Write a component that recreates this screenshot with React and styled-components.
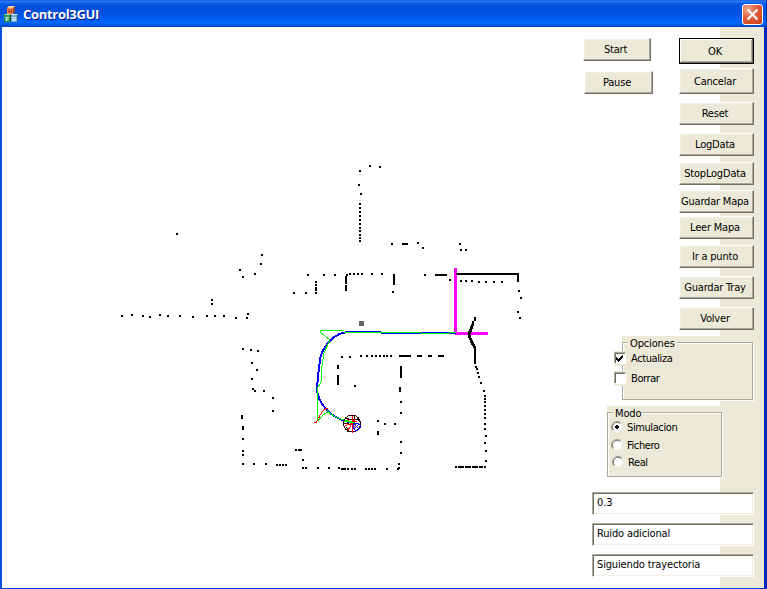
import React from 'react';
import styled, { createGlobalStyle } from 'styled-components';

const face = '#ece9d8';

const GlobalStyle = createGlobalStyle`
  * { box-sizing: border-box; }
  body { margin: 0; overflow: hidden; }
  button, input { font: inherit; color: inherit; letter-spacing: inherit; }
`;

const Window = styled.div`
  width: 767px;
  height: 589px;
  display: flex;
  flex-direction: column;
  color: #000;
  font-family: 'DejaVu Sans Condensed', 'DejaVu Sans', sans-serif;
  font-stretch: condensed;
  font-size: 11px;
  line-height: 13px;
  letter-spacing: -0.15px;
`;

const TitleBar = styled.header`
  height: 27px;
  flex: none;
  display: flex;
  align-items: center;
  padding: 1px 3px 0 4px;
  background: linear-gradient(to bottom, #0a4fd8 0, #2b7cf5 1px, #2272f0 2px, #0558e3 4px, #0150dc 8px, #0152e2 14px, #025ef5 19px, #0266ff 23px, #0157e0 25px, #003fc4 27px);
  border-right: 1px solid #0130a8;
`;

const Title = styled.h1`
  flex: 1;
  margin: 0 0 0 4px;
  color: #fff;
  font: bold 13px/18px 'Open Sans', 'Noto Sans', sans-serif;
  letter-spacing: -0.3px;
  text-shadow: 1px 1px 0 #0a1883;
`;

const CloseButton = styled.button`
  width: 21px;
  height: 21px;
  display: grid;
  place-items: center;
  padding: 0;
  border: 1px solid #fff;
  border-radius: 3px;
  background: radial-gradient(circle at 25% 20%, #f0a48c 0, #e2603c 45%, #cc3a12 100%);
`;

const Client = styled.main`
  flex: 1;
  min-height: 0;
  display: flex;
  border-left: 2px solid #0550e0;
  border-right: 3px solid #0128b8;
  border-bottom: 1px solid #0045dc;
  background: linear-gradient(to right, #fff 718px, ${face} 718px);
`;

const MapDrawing = styled.svg`
  width: 581px;
  height: 561px;
  flex: none;
  display: block;
`;

const Panel = styled.aside`
  width: 171px;
  flex: none;
  padding-top: 11px;
`;

const ButtonColumns = styled.div`
  display: flex;
  justify-content: space-between;
`;

const ButtonColumn = styled.div`
  display: flex;
  flex-direction: column;
`;

const PushButton = styled.button`
  width: ${(p) => p.$width || 75}px;
  height: ${(p) => p.$height || 23}px;
  margin: ${(p) => p.$gap || 0}px 0 0 ${(p) => p.$indent || 0}px;
  padding: 0 3px ${(p) => (p.$height ? 0 : 1)}px 0;
  border: 1px solid;
  border-color: ${(p) => (p.$default ? '#000' : '#fff #716f64 #716f64 #fff')};
  box-shadow: ${(p) => p.$default
    ? 'inset -1px -1px #716f64, inset 1px 1px #fff, inset -2px -2px #aca899'
    : 'inset -1px -1px #aca899, inset 1px 1px #f1efe2'};
  background: ${face};
  letter-spacing: -0.2px;
  white-space: nowrap;
`;

const GroupBox = styled.section`
  width: ${(p) => p.$width}px;
  height: ${(p) => p.$height}px;
  margin: ${(p) => p.$gap}px 0 0 ${(p) => p.$indent}px;
  padding-top: 6px;
  background: ${face};
`;

const GroupFrame = styled.div`
  height: 100%;
  border: 1px solid #aca899;
  box-shadow: 1px 1px #fff, inset 1px 1px #fff;
`;

const GroupLegend = styled.h2`
  width: max-content;
  margin: -6px 0 0 5px;
  padding: 0 2px;
  font: inherit;
  background: ${face};
`;

const Option = styled.label`
  width: max-content;
  display: flex;
  align-items: center;
  height: ${(p) => p.$height}px;
  margin: ${(p) => p.$gap || 0}px 0 0 ${(p) => p.$indent || 0}px;
  gap: ${(p) => p.$space || 4}px;
  letter-spacing: -0.4px;
`;

const CheckMark = styled.span`
  width: 13px;
  height: 15px;
  display: flex;
  align-items: flex-start;
  padding-top: 1px;
  background: ${face};
`;

const CheckFace = styled.span`
  width: 12px;
  height: 12px;
  display: grid;
  place-items: center;
  border: 1px solid;
  border-color: #aca899 #fff #fff #aca899;
  box-shadow: inset 1px 1px #716f64, inset -1px -1px #fff;
  background: #fff;
`;

const RadioIcon = styled.svg`
  width: 12px;
  height: 12px;
  display: block;
  margin-top: -1px;
`;

const Fields = styled.div`
  display: flex;
  flex-direction: column;
  gap: 8px;
  margin: 15px 0 0 9px;
`;

const TextField = styled.input`
  width: 162px;
  height: 23px;
  padding: 0 3px 3px 4px;
  border: 1px solid;
  border-color: #aca899 #fff #fff #aca899;
  border-radius: 0;
  box-shadow: inset 1px 1px #716f64, inset -1px -1px #f1efe2;
  background: #fff;
  outline: none;
`;

/* Centres of the 2x2 laser readings. */
const points = [
  [122,316],[132,315],[143,316],[150,317],[160,315],[168,316],[180,316],[193,317],[207,316],[215,316],[224,316],
  [236,318],[247,318],[248,314],[212,300],[212,304],[177,234],[240,270],[243,277],[255,274],[261,264],[262,255],
  [360,171],[370,166],[380,167],[359,185],[361,194],[360,204],[360,208],[360,212],[360,216],[360,220],[360,224],
  [360,228],[360,231],[360,235],[360,238],[360,241],[392,244],[418,243],[423,248],[308,275],[324,275],[335,275],
  [347,275],[350,274],[354,274],[358,274],[362,274],[372,274],[382,274],[425,275],[393,292],[316,282],[316,285],
  [316,293],[294,293],[306,293],[460,244],[461,250],[466,250],[450,280],[461,281],[466,281],[472,281],[479,282],
  [486,282],[494,282],[502,282],[519,291],[521,298],[518,312],[520,318],[476,367],[477,369],[478,373],[479,377],
  [481,383],[484,391],[485,396],[485,399],[485,402],[485,406],[485,410],[485,414],[485,418],[485,424],[485,429],
  [486,436],[485,443],[486,451],[486,461],[485,467],[456,467],[342,357],[350,357],[361,356],[367,356],[372,356],
  [376,356],[380,356],[384,356],[387,356],[391,356],[401,402],[401,413],[378,421],[385,424],[395,424],[401,442],
  [401,453],[399,464],[399,468],[398,469],[355,386],[348,469],[352,469],[355,469],[366,469],[369,469],[372,469],
  [375,469],[387,469],[243,349],[251,350],[258,351],[252,363],[257,370],[252,379],[253,389],[255,391],[264,391],
  [273,398],[273,411],[243,439],[243,451],[243,455],[243,464],[254,464],[266,464],[277,465],[280,465],[283,465],
  [286,465],[296,450],[303,460],[303,468],[306,468],[318,468],[329,468],[339,468],
];

/* Runs of merged readings: x, y, width, height. */
const runs = [
  [402,243,6,2],[435,274,12,2],[345,276,2,8],[345,285,2,6],[393,274,2,11],[315,287,2,4],[456,273,62,2],
  [517,273,2,9],[474,346,2,18],[458,466,6,2],[465,466,6,2],[472,466,6,2],[479,466,4,2],[399,355,12,2],
  [417,355,5,2],[428,355,4,2],[438,355,6,2],[400,366,2,12],[399,387,2,5],[377,431,2,4],[341,468,5,2],
  [337,365,2,4],[337,375,2,10],[241,415,2,4],[242,426,2,4],[298,449,4,2],
  [474,317,2,4],[472,321,2,5],[471,324,2,5],[470,326,2,6],[469,329,2,5],[468,331,2,7],
  [469,335,2,5],[470,338,2,5],[471,340,2,5],[472,342,2,4],[473,344,2,4],
];

const dots = points.map(([x, y]) => `M${x - 1} ${y - 1}h2v2h-2z`).join('');
const bars = runs.map(([x, y, w, h]) => `M${x} ${y}h${w}v${h}h${-w}z`).join('');

function Map() {
  return (
    <MapDrawing viewBox="2 27 581 561" shapeRendering="crispEdges" fill="none">
      <rect x="359" y="321" width="5" height="5" fill="#666" />
      <path d="M454 268h3v64h31v3h-33v-3h-1z" fill="#f0f" />
      <path d="M350 332Q338 332 330 341Q321 350 320 360L318 376L317 388Q317 400 327 410Q334 418 346 421L356 425" stroke="#00f" strokeWidth="2" />
      <path d="M348 331.5H381M381 333.5H421M421 332.5H449" stroke="#00f" />
      <path d="M344 332.5H421M421 333.5H449M449 332.5H456" stroke="#0f0" />
      <path d="M381 333.5H421M449 333.5H456" stroke="#00f" />
      <path d="M344 330.5H320V332L330 340L324 353Q321 367 321 382L317.5 388V416L318 421L322 416L327 412L331 414M327 410Q333 417 341 419L353 422" stroke="#0f0" />
      <path d="M314 422.5h3M316 422l2-2l2-5l3-4l4-3l1 2" stroke="#f00" strokeDasharray="4 1" />
      <g stroke="#300000">
        <path d="M346 418l5 2l6-1M354 416v4M357 418l3 4M344 423h5M346 427l4 5M347 431.5h3" />
        <circle cx="352" cy="423.5" r="8.5" />
      </g>
      <path d="M352 416v17M347 419l9 9M345 426l12-5M348 430l7-11M349 424h7" stroke="#f00" />
      <path d="M344 421l11 2" stroke="#0f0" />
      <path d="M355 423h3l2 2v3l-2 2h-3l-2-2v-3zM354 424l5 5M359 424l-5 5" stroke="#00f" />
      <path d={dots + bars} fill="#000" />
    </MapDrawing>
  );
}

function BlocksIcon() {
  return (
    <svg width="15" height="17" viewBox="0 0 15 17">
      <path d="M3 2l2-2h6v6l-2 2H3z" fill="#984626" />
      <path d="M3 2h6v6H3z" fill="#f08a50" />
      <path d="M3 2l2-2h6l-2 2z" fill="#ffd0a0" />
      <path d="M0 9l1-1h6v7l-1 1H0z" fill="#065332" />
      <path d="M0 9h6v7H0z" fill="#299253" />
      <path d="M0 9l1-1h6l-1 1z" fill="#a6dda8" />
      <path d="M7 9l1-1h6v7l-1 1H7z" fill="#245a9b" />
      <path d="M7 9h6v7H7z" fill="#6fa6cf" />
      <path d="M7 9l1-1h6l-1 1z" fill="#d3eaff" />
      <g fontFamily="Liberation Sans, sans-serif" fontSize="6" fontWeight="700">
        <text x="4" y="7" fill="#8d1c13">H</text>
        <text x="1.4" y="15" fill="#fff">F</text>
        <text x="8" y="15" fill="#e8f4ff">B</text>
      </g>
    </svg>
  );
}

function Radio({ checked }) {
  return (
    <RadioIcon viewBox="0 0 12 12">
      <circle cx="6" cy="6" r="5.3" fill="#fff" />
      <path d="M2 10A5.5 5.5 0 0 1 10 2" fill="none" stroke="#aca899" />
      <path d="M2.7 9.3A4.5 4.5 0 0 1 9.3 2.7" fill="none" stroke="#716f64" />
      <path d="M9.5 2.5A4.7 4.7 0 0 1 2.5 9.5" fill="none" stroke="#f1efe2" />
      {checked && <path d="M5 4h2v1h1v2H7v1H5V7H4V5h1z" fill="#000" shapeRendering="crispEdges" />}
    </RadioIcon>
  );
}

const commands = [
  { label: 'OK', height: 26, main: true },
  { label: 'Cancelar', height: 26, gap: 4 },
  { label: 'Reset', gap: 8 },
  { label: 'LogData', gap: 8 },
  { label: 'StopLogData', gap: 6 },
  { label: 'Guardar Mapa', gap: 5 },
  { label: 'Leer Mapa', gap: 3 },
  { label: 'Ir a punto', gap: 6 },
  { label: 'Guardar Tray', gap: 8 },
  { label: 'Volver', gap: 8 },
];

export default function App() {
  return (
    <>
      <GlobalStyle />
      <Window>
        <TitleBar>
          <BlocksIcon />
          <Title>Control3GUI</Title>
          <CloseButton aria-label="Cerrar">
            <svg width="13" height="13" viewBox="0 0 13 13">
              <path d="M1.5 1.5l10 10M11.5 1.5l-10 10" stroke="#fff" strokeWidth="2.2" />
            </svg>
          </CloseButton>
        </TitleBar>
        <Client>
          <Map />
          <Panel>
            <ButtonColumns>
              <ButtonColumn>
                <PushButton $width={68}>Start</PushButton>
                <PushButton $width={69} $gap={10} $indent={1}>Pause</PushButton>
              </ButtonColumn>
              <ButtonColumn>
                {commands.map((c) => (
                  <PushButton key={c.label} $height={c.height} $gap={c.gap} $default={c.main}>{c.label}</PushButton>
                ))}
              </ButtonColumn>
            </ButtonColumns>
            <GroupBox $width={131} $height={64} $gap={6} $indent={39}>
              <GroupFrame>
                <GroupLegend>Opciones</GroupLegend>
                <Option $height={15} $gap={1} $indent={-9} $space={4}>
                  <CheckMark>
                    <CheckFace>
                      <svg width="8" height="8" viewBox="0 0 8 8" shapeRendering="crispEdges">
                        <path d="M0 3h1v1h1v1h1V4h1V3h1V2h1V1h1v3H6v1H5v1H4v1H3v1H2V7H1V6H0z" />
                      </svg>
                    </CheckFace>
                  </CheckMark>
                  Actualiza
                </Option>
                <Option $height={15} $gap={5} $indent={-9} $space={4}>
                  <CheckMark><CheckFace /></CheckMark>
                  Borrar
                </Option>
              </GroupFrame>
            </GroupBox>
            <GroupBox $width={115} $height={71} $gap={6} $indent={24}>
              <GroupFrame>
                <GroupLegend>Modo</GroupLegend>
                <Option $height={14} $indent={3}><Radio checked />Simulacion</Option>
                <Option $height={14} $gap={4} $indent={3}><Radio />Fichero</Option>
                <Option $height={14} $gap={3} $indent={4}><Radio />Real</Option>
              </GroupFrame>
            </GroupBox>
            <Fields>
              <TextField defaultValue="0.3" />
              <TextField defaultValue="Ruido adicional" />
              <TextField defaultValue="Siguiendo trayectoria" />
            </Fields>
          </Panel>
        </Client>
      </Window>
    </>
  );
}
